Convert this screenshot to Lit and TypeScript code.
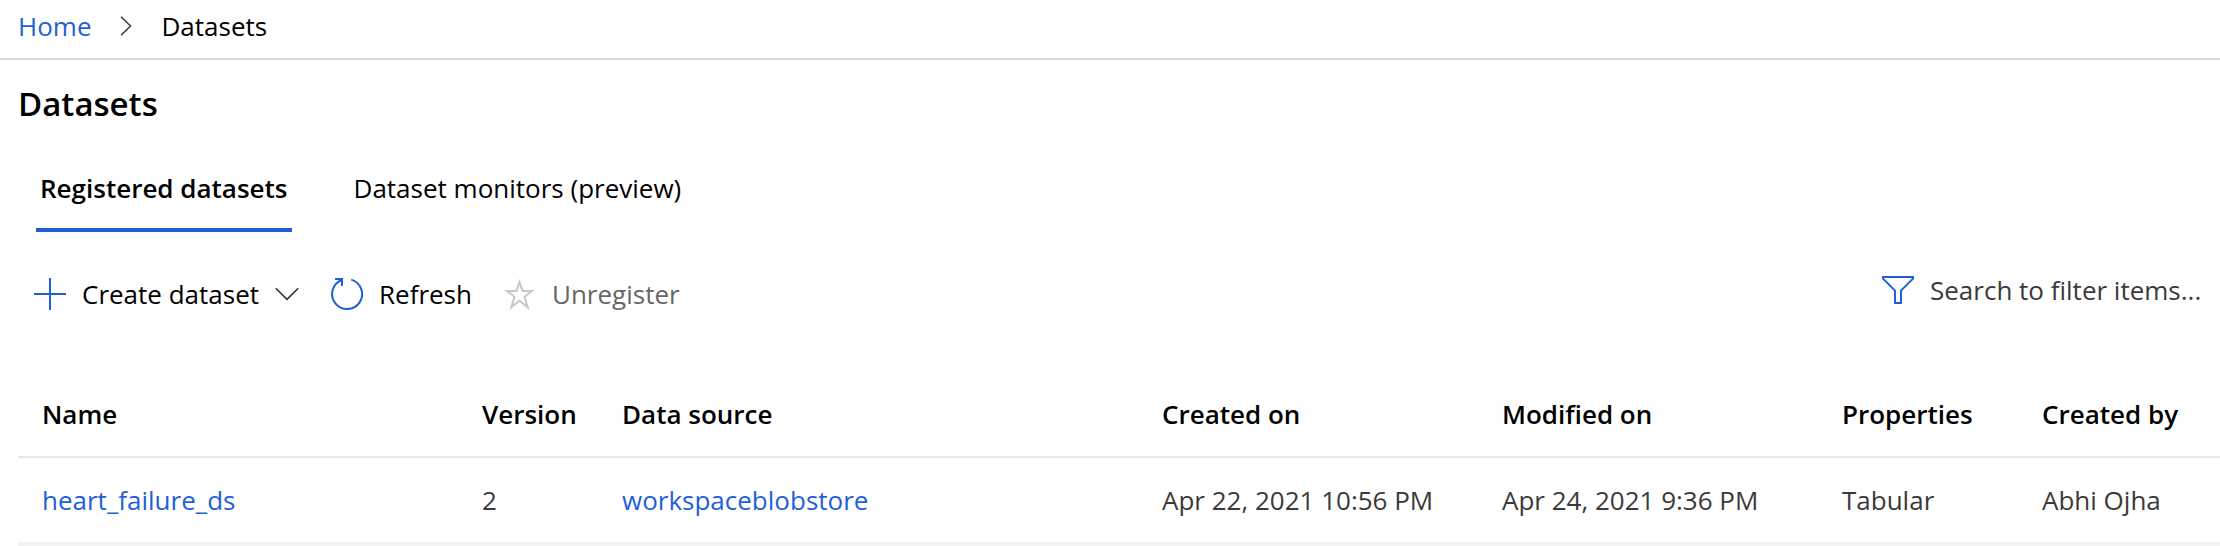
import { LitElement, html, css } from "lit";
import { customElement, state } from "lit/decorators.js";

interface Dataset {
  name: string;
  version: number;
  source: string;
  created: string;
  modified: string;
  properties: string;
  author: string;
}

@customElement("app-root")
export class AppRoot extends LitElement {
  static styles = css`
    :host {
      display: block;
      background: #fff;
      color: #000;
      font-family: "Open Sans", "Noto Sans", sans-serif;
      font-size: 26px;
      line-height: 36px;
    }
    * {
      box-sizing: border-box;
    }
    a {
      color: #1f5fd9;
      text-decoration: none;
    }
    button,
    input {
      font: inherit;
      color: inherit;
      background: none;
      border: 0;
      padding: 0;
      margin: 0;
    }
    svg {
      display: block;
      flex: none;
      fill: none;
    }
    .crumbs {
      border-bottom: 2px solid #dadada;
      padding: 8px 18px 14px;
    }
    .crumb-list {
      display: flex;
      align-items: center;
      gap: 29px;
      list-style: none;
      margin: 0;
      padding: 0;
    }
    .crumb {
      display: flex;
      align-items: center;
      gap: 29px;
    }
    .title {
      font-size: 33px;
      line-height: 48px;
      font-weight: 600;
      margin: 0;
      padding: 20px 18px 0;
    }
    .tabs {
      display: flex;
      gap: 58px;
      padding: 32px 36px 0;
    }
    .tab {
      height: 72px;
      padding: 0 4px 12px;
      border-bottom: 4px solid transparent;
    }
    .tab.active {
      font-weight: 600;
      border-color: #1f5fd9;
    }
    .toolbar {
      display: flex;
      justify-content: space-between;
      align-items: flex-start;
      padding: 40px 18px 0 34px;
    }
    .actions {
      display: flex;
      align-items: center;
      gap: 32px;
      padding-top: 4px;
    }
    .action {
      display: flex;
      align-items: center;
      gap: 16px;
    }
    .action:disabled {
      color: #666;
    }
    .search {
      display: flex;
      align-items: center;
      gap: 16px;
    }
    .search-box {
      width: 272px;
      height: 36px;
      color: #3b3a39;
      outline: 0;
    }
    .search-box::placeholder {
      color: #3b3a39;
      opacity: 1;
    }
    .grid-area {
      padding: 60px 0 0 18px;
    }
    .grid {
      width: 100%;
      table-layout: fixed;
      border-collapse: collapse;
      text-align: left;
      white-space: nowrap;
    }
    .w-name { width: 440px; }
    .w-version { width: 140px; }
    .w-source { width: 540px; }
    .w-date { width: 340px; }
    .w-props { width: 200px; }
    th,
    td {
      padding: 24px 0 24px 24px;
    }
    th {
      font-weight: 600;
      border-bottom: 2px solid #e8e8e8;
    }
    td {
      color: #3b3a39;
      border-bottom: 4px solid #f3f3f3;
    }
  `;

  @state() private tab = 0;

  private tabs = ["Registered datasets", "Dataset monitors (preview)"];

  private rows: Dataset[] = [
    {
      name: "heart_failure_ds",
      version: 2,
      source: "workspaceblobstore",
      created: "Apr 22, 2021 10:56 PM",
      modified: "Apr 24, 2021 9:36 PM",
      properties: "Tabular",
      author: "Abhi Ojha",
    },
  ];

  render() {
    return html`
      <nav class="crumbs" aria-label="Breadcrumb">
        <ol class="crumb-list">
          <li class="crumb">
            <a href="#home">Home</a>
            <svg width="12" height="20" viewBox="0 0 12 20" stroke="#333" stroke-width="1.4" aria-hidden="true">
              <path d="M1 .7 10.6 10 1 19.3" />
            </svg>
          </li>
          <li aria-current="page">Datasets</li>
        </ol>
      </nav>
      <main>
        <h1 class="title">Datasets</h1>
        <div class="tabs" role="tablist">
          ${this.tabs.map(
            (label, i) => html`<button
              class="tab ${i === this.tab ? "active" : ""}"
              role="tab"
              aria-selected=${i === this.tab}
              @click=${() => (this.tab = i)}
            >${label}</button>`
          )}
        </div>
        <div class="toolbar">
          <div class="actions">
            <button class="action" aria-haspopup="menu">
              <svg width="32" height="32" viewBox="0 0 32 32" stroke="#1f5fd9" stroke-width="2" aria-hidden="true">
                <path d="M16 0v32M0 16h32" />
              </svg>
              Create dataset
              <svg width="24" height="14" viewBox="0 0 24 14" stroke="#333" stroke-width="1.6" aria-hidden="true">
                <path d="M.8 1.2 12 12.4 23.2 1.2" />
              </svg>
            </button>
            <button class="action">
              <svg width="32" height="32" viewBox="0 0 32 32" stroke="#1f5fd9" stroke-width="2" aria-hidden="true">
                <path d="M20.200 1.600A15 15 0 1 1 10.800 2M4 1h7v7" />
              </svg>
              Refresh
            </button>
            <button class="action" disabled>
              <svg width="32" height="32" viewBox="0 0 32 32" stroke="#c8c8c8" stroke-width="2" aria-hidden="true">
                <path d="M15.500 4 18.500 13H28l-7.500 5.800 3.300 10.600-8.300-6.600-8.300 6.600 3.300-10.600L3 13h9.500z" />
              </svg>
              Unregister
            </button>
          </div>
          <label class="search">
            <svg width="32" height="28" viewBox="0 0 32 28" stroke="#1f5fd9" stroke-width="2" aria-hidden="true">
              <path d="M1 1h30v1.600L19 14.600V27h-6V14.600L1 2.600z" />
            </svg>
            <input class="search-box" type="text" placeholder="Search to filter items..." aria-label="Search to filter items" />
          </label>
        </div>
        <div class="grid-area">
          <table class="grid">
            <colgroup>
              <col class="w-name" />
              <col class="w-version" />
              <col class="w-source" />
              <col class="w-date" />
              <col class="w-date" />
              <col class="w-props" />
              <col />
            </colgroup>
            <thead>
              <tr>
                <th scope="col">Name</th>
                <th scope="col">Version</th>
                <th scope="col">Data source</th>
                <th scope="col">Created on</th>
                <th scope="col">Modified on</th>
                <th scope="col">Properties</th>
                <th scope="col">Created by</th>
              </tr>
            </thead>
            <tbody>
              ${this.rows.map(
                (row) => html`<tr>
                  <td><a href="#dataset">${row.name}</a></td>
                  <td>${row.version}</td>
                  <td><a href="#datastore">${row.source}</a></td>
                  <td>${row.created}</td>
                  <td>${row.modified}</td>
                  <td>${row.properties}</td>
                  <td>${row.author}</td>
                </tr>`
              )}
            </tbody>
          </table>
        </div>
      </main>
    `;
  }
}
